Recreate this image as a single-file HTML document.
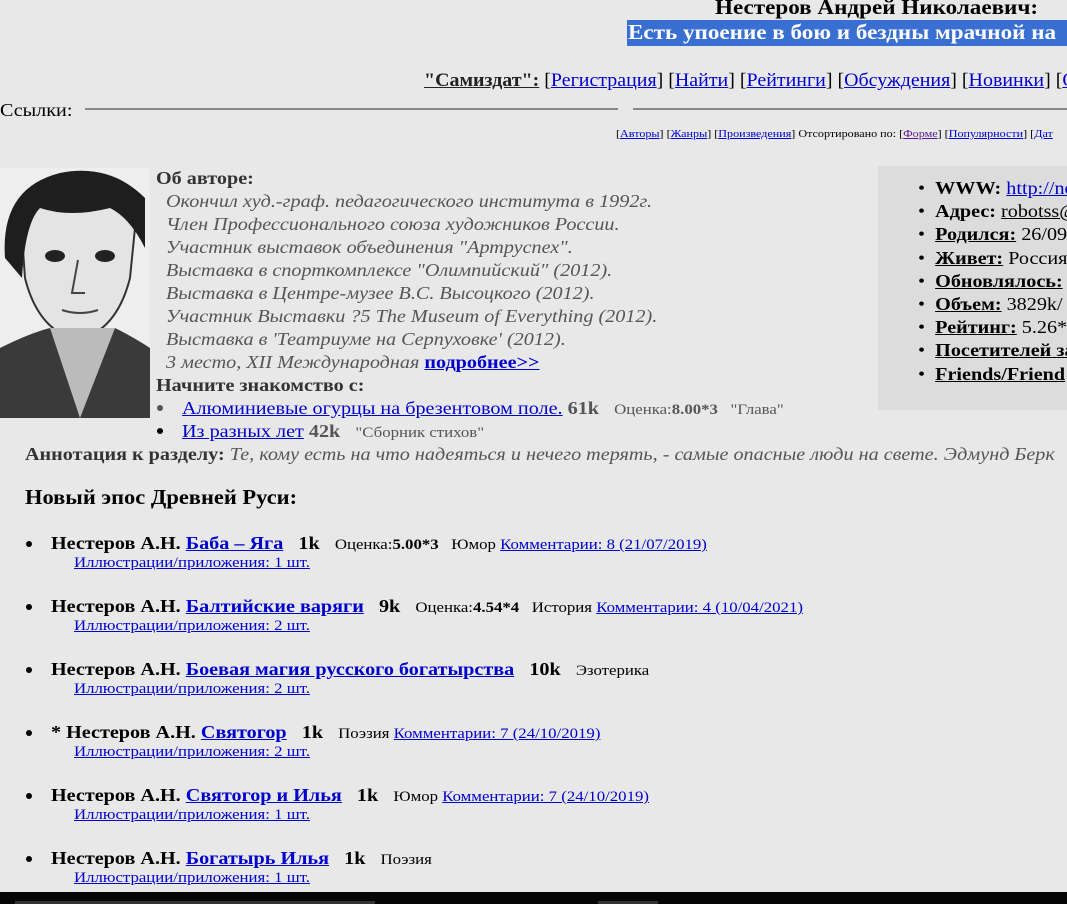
<!DOCTYPE html>
<html><head><meta charset="utf-8"><style>
html,body{margin:0;padding:0;overflow:hidden;}
body{width:1067px;height:904px;background:#e8e8e8;font-family:"Liberation Serif",serif;color:#000;}
#w{position:relative;width:1067px;height:904px;overflow:hidden;}
.a{position:absolute;white-space:nowrap;line-height:1;}
.x{transform:scaleX(1.12);transform-origin:0 0;}
a{color:#0000cc;text-decoration:underline;}
.f18{font-size:18px;}
.it{font-style:italic;color:#555;font-size:18px;}
.s14{font-size:15px;}
.b{font-weight:bold;}
.dot{position:absolute;width:6px;height:6px;border-radius:50%;background:#000;}
</style></head><body><div id="w">
<div class="a b" style="left:715px;top:-3px;font-size:21px;transform:scaleX(1.1);transform-origin:0 0;">Нестеров Андрей Николаевич:</div>
<div class="a" style="left:627px;top:20px;width:440px;height:26px;background:#3a6fd2;"></div>
<div class="a b" style="left:628px;top:22px;font-size:21px;color:#fff;transform:scaleX(1.1);transform-origin:0 0;">Есть упоение в бою и бездны мрачной на</div>
<div class="a" style="left:424px;top:71px;font-size:19px;transform:scaleX(1.05);transform-origin:0 0;"><a class="b" style="color:#222" href="#">"Самиздат":</a> [<a href="#">Регистрация</a>] [<a href="#">Найти</a>] [<a href="#">Рейтинги</a>] [<a href="#">Обсуждения</a>] [<a href="#">Новинки</a>] [<a href="#">О</a></div>
<div class="a x" style="left:0;top:101px;font-size:18px;">Ссылки:</div>
<div class="a" style="left:85px;top:108px;width:533px;height:2px;background:#888;"></div>
<div class="a" style="left:633px;top:108px;width:434px;height:2px;background:#888;"></div>
<div class="a" style="left:616px;top:129px;font-size:11px;transform:scaleX(1.1);transform-origin:0 0;">[<a href="#">Авторы</a>] [<a href="#">Жанры</a>] [<a href="#">Произведения</a>] Отсортировано по: [<a href="#" style="color:#551a8b">Форме</a>] [<a href="#">Популярности</a>] [<a href="#">Дат</a></div>
<svg class="a" style="left:0;top:168px;" width="150" height="250" viewBox="0 0 150 250">
<rect width="150" height="250" fill="#eee"/>
<path d="M20 40 Q40 0 90 5 Q130 10 135 60 L130 110 Q120 150 95 165 L60 165 Q35 150 25 110 Z" fill="#e4e4e4" stroke="#333" stroke-width="2"/>
<path d="M5 90 Q0 20 60 5 Q110 -5 145 30 L145 80 Q130 50 110 40 Q70 50 40 40 Q25 55 22 110 Z" fill="#1e1e1e"/>
<ellipse cx="55" cy="88" rx="10" ry="6" fill="#222"/><ellipse cx="105" cy="88" rx="10" ry="6" fill="#222"/>
<path d="M78 92 L72 125 L85 125" fill="none" stroke="#444" stroke-width="2"/>
<path d="M62 142 Q80 148 98 142" fill="none" stroke="#444" stroke-width="2"/>
<path d="M0 250 L0 180 Q30 165 50 160 L80 215 L115 160 Q135 170 150 180 L150 250 Z" fill="#3a3a3a"/>
<path d="M50 160 L80 250 L115 160" fill="#bbb"/>
</svg>
<div class="a b f18 x" style="left:156px;top:169px;color:#333">Об авторе:</div>
<div class="a it x" style="left:166px;top:192px;">Окончил худ.-граф. педагогического института в 1992г.</div>
<div class="a it x" style="left:166px;top:215px;">Член Профессионального союза художников России.</div>
<div class="a it x" style="left:166px;top:238px;">Участник выставок объединения "Артруспех".</div>
<div class="a it x" style="left:166px;top:261px;">Выставка в спорткомплексе "Олимпийский" (2012).</div>
<div class="a it x" style="left:166px;top:284px;">Выставка в Центре-музее В.С. Высоцкого (2012).</div>
<div class="a it x" style="left:166px;top:307px;">Участник Выставки ?5 The Museum of Everything (2012).</div>
<div class="a it x" style="left:166px;top:330px;">Выставка в 'Театриуме на Серпуховке' (2012).</div>
<div class="a it x" style="left:166px;top:353px;">3 место, XII Международная <a class="b" style="font-style:normal" href="#">подробнее&gt;&gt;</a></div>
<div class="a b f18 x" style="left:156px;top:376px;color:#333">Начните знакомство с:</div>
<div class="dot" style="left:157px;top:405px;background:#555"></div>
<div class="a f18 x" style="left:182px;top:399px;color:#555"><a href="#">Алюминиевые огурцы на брезентовом поле.</a> <b>61k</b> &nbsp; <span class="s14">Оценка:<b>8.00*3</b> &nbsp; "Глава"</span></div>
<div class="dot" style="left:157px;top:428px;"></div>
<div class="a f18 x" style="left:182px;top:422px;color:#555"><a href="#">Из разных лет</a> <b>42k</b> &nbsp; <span class="s14">"Сборник стихов"</span></div>
<div class="a" style="left:878px;top:166px;width:189px;height:244px;background:#dcdcdc;"></div>
<div class="a" style="left:878px;top:166px;width:189px;height:244px;overflow:hidden;">
<div class="a f18 x" style="left:40px;top:11px;line-height:23.2px;">
<div>• &nbsp;<b>WWW:</b> <a href="#">http://nesterov</a></div>
<div>• &nbsp;<b>Адрес:</b> <u>robotss@</u></div>
<div>• &nbsp;<b><u>Родился:</u></b> 26/09</div>
<div>• &nbsp;<b><u>Живет:</u></b> Россия</div>
<div>• &nbsp;<b><u>Обновлялось:</u></b></div>
<div>• &nbsp;<b><u>Объем:</u></b> 3829k/</div>
<div>• &nbsp;<b><u>Рейтинг:</u></b> 5.26*</div>
<div>• &nbsp;<b><u>Посетителей за</u></b></div>
<div>• &nbsp;<b><u>Friends/Friend</u></b></div>
</div></div>
<div class="a f18 x" style="left:25px;top:445px;"><b style="color:#333">Аннотация к разделу:</b> <i style="color:#555">Те, кому есть на что надеяться и нечего терять, - самые опасные люди на свете. Эдмунд Берк</i></div>
<div class="a b" style="left:25px;top:487px;font-size:21px;transform:scaleX(1.07);transform-origin:0 0;">Новый эпос Древней Руси:</div>

<div class="dot" style="left:26px;top:541px;"></div>
<div class="a f18 x" style="left:51px;top:534px;"><b>Нестеров А.Н.</b> <a class="b" href="#">Баба – Яга</a> &nbsp; <b>1k</b> &nbsp; <span class="s14">Оценка:<b>5.00*3</b> &nbsp; Юмор <a href="#">Комментарии: 8 (21/07/2019)</a></span></div>
<div class="a s14 x" style="left:74px;top:556px;"><a href="#">Иллюстрации/приложения: 1 шт.</a></div>

<div class="dot" style="left:26px;top:604px;"></div>
<div class="a f18 x" style="left:51px;top:597px;"><b>Нестеров А.Н.</b> <a class="b" href="#">Балтийские варяги</a> &nbsp; <b>9k</b> &nbsp; <span class="s14">Оценка:<b>4.54*4</b> &nbsp; История <a href="#">Комментарии: 4 (10/04/2021)</a></span></div>
<div class="a s14 x" style="left:74px;top:619px;"><a href="#">Иллюстрации/приложения: 2 шт.</a></div>

<div class="dot" style="left:26px;top:667px;"></div>
<div class="a f18 x" style="left:51px;top:660px;"><b>Нестеров А.Н.</b> <a class="b" href="#">Боевая магия русского богатырства</a> &nbsp; <b>10k</b> &nbsp; <span class="s14">Эзотерика</span></div>
<div class="a s14 x" style="left:74px;top:682px;"><a href="#">Иллюстрации/приложения: 2 шт.</a></div>

<div class="dot" style="left:26px;top:730px;"></div>
<div class="a f18 x" style="left:51px;top:723px;"><b>* Нестеров А.Н.</b> <a class="b" href="#">Святогор</a> &nbsp; <b>1k</b> &nbsp; <span class="s14">Поэзия <a href="#">Комментарии: 7 (24/10/2019)</a></span></div>
<div class="a s14 x" style="left:74px;top:745px;"><a href="#">Иллюстрации/приложения: 2 шт.</a></div>

<div class="dot" style="left:26px;top:793px;"></div>
<div class="a f18 x" style="left:51px;top:786px;"><b>Нестеров А.Н.</b> <a class="b" href="#">Святогор и Илья</a> &nbsp; <b>1k</b> &nbsp; <span class="s14">Юмор <a href="#">Комментарии: 7 (24/10/2019)</a></span></div>
<div class="a s14 x" style="left:74px;top:808px;"><a href="#">Иллюстрации/приложения: 1 шт.</a></div>

<div class="dot" style="left:26px;top:856px;"></div>
<div class="a f18 x" style="left:51px;top:849px;"><b>Нестеров А.Н.</b> <a class="b" href="#">Богатырь Илья</a> &nbsp; <b>1k</b> &nbsp; <span class="s14">Поэзия</span></div>
<div class="a s14 x" style="left:74px;top:871px;"><a href="#">Иллюстрации/приложения: 1 шт.</a></div>

<div class="a" style="left:0;top:892px;width:1067px;height:12px;background:#050505;"></div>
<div class="a" style="left:15px;top:901px;width:360px;height:3px;background:#333;"></div>
<div class="a" style="left:598px;top:901px;width:60px;height:3px;background:#333;"></div>
</div></body></html>
